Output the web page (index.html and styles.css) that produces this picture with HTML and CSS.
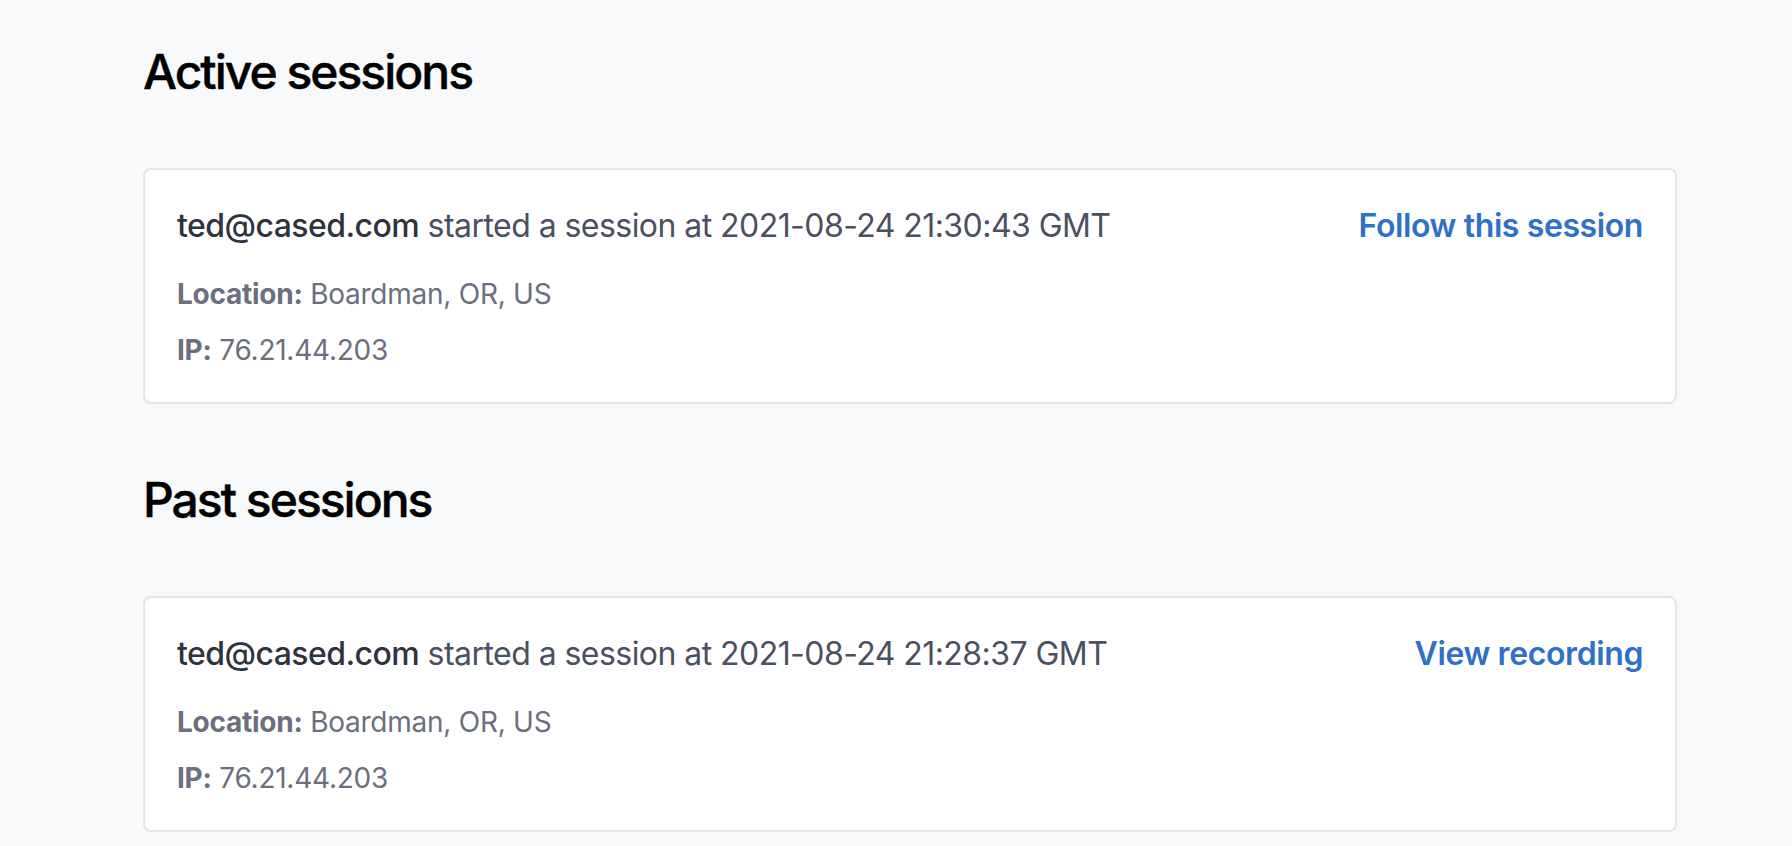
FILE: index.html
```html
<!DOCTYPE html>
<html lang="en">
<head>
<meta charset="utf-8">
<title>Sessions</title>
<link rel="stylesheet" href="styles.css">
</head>
<body>
<main class="page">
  <section class="section">
    <h2 class="section-title">Active sessions</h2>
    <div class="session-card">
      <div class="session-head">
        <p class="session-summary"><span class="session-user">ted@cased.com</span> started a session at 2021-08-24 21:30:43 GMT</p>
        <a class="session-action" href="#">Follow this session</a>
      </div>
      <p class="session-meta session-meta-first"><strong class="meta-label">Location:</strong> Boardman, OR, US</p>
      <p class="session-meta"><strong class="meta-label">IP:</strong> 76.21.44.203</p>
    </div>
  </section>
  <section class="section">
    <h2 class="section-title">Past sessions</h2>
    <div class="session-card">
      <div class="session-head">
        <p class="session-summary"><span class="session-user">ted@cased.com</span> started a session at 2021-08-24 21:28:37 GMT</p>
        <a class="session-action" href="#">View recording</a>
      </div>
      <p class="session-meta session-meta-first"><strong class="meta-label">Location:</strong> Boardman, OR, US</p>
      <p class="session-meta"><strong class="meta-label">IP:</strong> 76.21.44.203</p>
    </div>
  </section>
</main>
</body>
</html>
```
FILE: styles.css
```css
html, body {
  margin: 0;
  padding: 0;
}
body {
  background: #f8f9fb;
  font-family: Inter, "Noto Sans", "Liberation Sans", sans-serif;
  color: #111827;
  -webkit-font-smoothing: antialiased;
}
.page {
  padding: 40px 115px 0 143px;
}
.section + .section {
  margin-top: 64px;
}
.section-title {
  margin: 0 0 64px;
  font-size: 48px;
  line-height: 64px;
  font-weight: 500;
  color: #000;
  letter-spacing: -2px;
  -webkit-text-stroke: 0.4px #000;
}
.session-card {
  background: #fff;
  border: 2px solid #e3e5e9;
  border-radius: 8px;
  padding: 32px;
}
.session-head {
  display: flex;
  justify-content: space-between;
  align-items: flex-start;
}
.session-summary {
  margin: 0;
  font-size: 32px;
  line-height: 48px;
  color: #4b5060;
  letter-spacing: -0.55px;
}
.session-user {
  font-weight: 500;
  color: #2f333d;
}
.session-action {
  font-size: 32px;
  line-height: 48px;
  font-weight: 600;
  color: #2f70c8;
  text-decoration: none;
  letter-spacing: -0.4px;
}
.session-meta {
  margin: 16px 0 0;
  font-size: 28px;
  line-height: 40px;
  color: #6b6f7e;
  letter-spacing: -0.25px;
}
.session-meta-first {
  margin-top: 24px;
}
.meta-label {
  font-weight: 700;
}
```
